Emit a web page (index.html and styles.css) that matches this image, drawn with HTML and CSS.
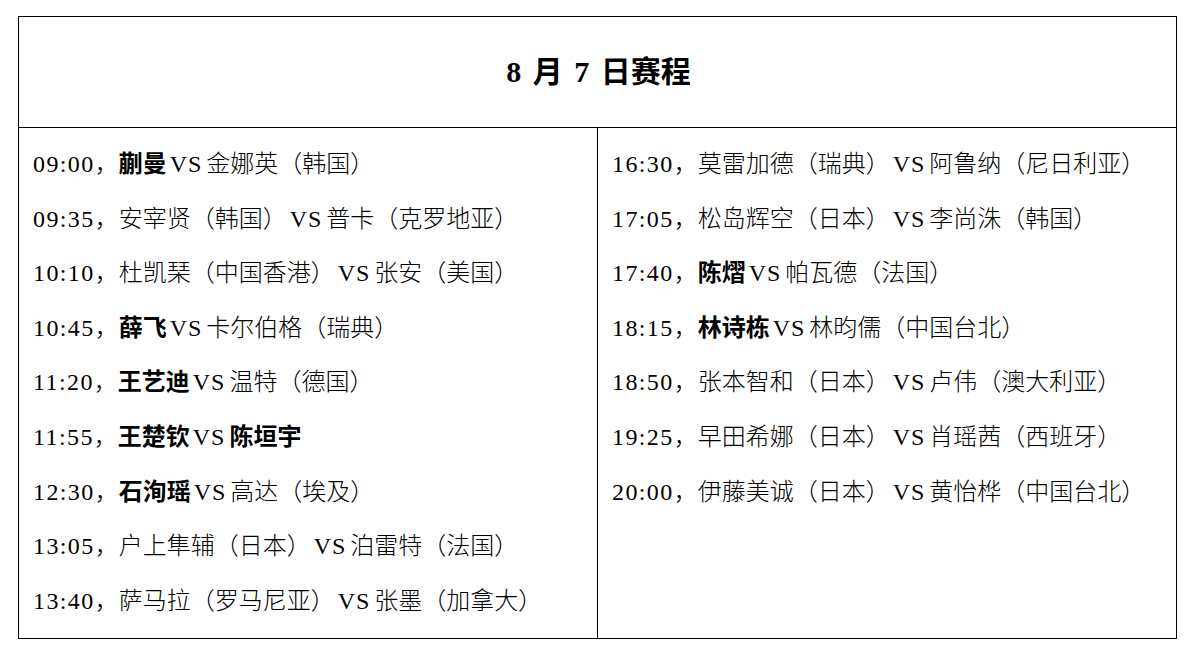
FILE: index.html
```html
<!DOCTYPE html>
<html lang="zh-CN">
<head>
<meta charset="utf-8">
<title>8月7日赛程</title>
<link rel="stylesheet" href="styles.css">
</head>
<body>
<div class="sheet">
  <div class="head"><h1 class="title">8 月 7 日赛程</h1></div>
  <div class="body">
    <div class="col">
      <div class="row"><span class="t">09:00</span>，<b>蒯曼</b><span class="vs">VS</span>金娜英（韩国）</div>
      <div class="row"><span class="t">09:35</span>，安宰贤（韩国）<span class="vs">VS</span>普卡（克罗地亚）</div>
      <div class="row"><span class="t">10:10</span>，杜凯琹（中国香港）<span class="vs">VS</span>张安（美国）</div>
      <div class="row"><span class="t">10:45</span>，<b>薛飞</b><span class="vs">VS</span>卡尔伯格（瑞典）</div>
      <div class="row"><span class="t">11:20</span>，<b>王艺迪</b><span class="vs">VS</span>温特（德国）</div>
      <div class="row"><span class="t">11:55</span>，<b>王楚钦</b><span class="vs">VS</span><b>陈垣宇</b></div>
      <div class="row"><span class="t">12:30</span>，<b>石洵瑶</b><span class="vs">VS</span>高达（埃及）</div>
      <div class="row"><span class="t">13:05</span>，户上隼辅（日本）<span class="vs">VS</span>泊雷特（法国）</div>
      <div class="row"><span class="t">13:40</span>，萨马拉（罗马尼亚）<span class="vs">VS</span>张墨（加拿大）</div>
    </div>
    <div class="col">
      <div class="row"><span class="t">16:30</span>，莫雷加德（瑞典）<span class="vs">VS</span>阿鲁纳（尼日利亚）</div>
      <div class="row"><span class="t">17:05</span>，松岛辉空（日本）<span class="vs">VS</span>李尚洙（韩国）</div>
      <div class="row"><span class="t">17:40</span>，<b>陈熠</b><span class="vs">VS</span>帕瓦德（法国）</div>
      <div class="row"><span class="t">18:15</span>，<b>林诗栋</b><span class="vs">VS</span>林昀儒（中国台北）</div>
      <div class="row"><span class="t">18:50</span>，张本智和（日本）<span class="vs">VS</span>卢伟（澳大利亚）</div>
      <div class="row"><span class="t">19:25</span>，早田希娜（日本）<span class="vs">VS</span>肖瑶茜（西班牙）</div>
      <div class="row"><span class="t">20:00</span>，伊藤美诚（日本）<span class="vs">VS</span>黄怡桦（中国台北）</div>
    </div>
  </div>
</div>
</body>
</html>
```
FILE: styles.css
```css
html, body {
  margin: 0;
  padding: 0;
  background: #fff;
}
body {
  padding: 16px 0 0 18px;
  font-family: "Liberation Serif", "Noto Sans CJK SC", serif;
  color: #000;
}
.sheet {
  width: 1157px;
  border: 1px solid #000;
}
.head {
  height: 110px;
  border-bottom: 1px solid #000;
  display: flex;
  align-items: center;
  justify-content: center;
}
.title {
  margin: 0;
  font-size: 30px;
  font-weight: 700;
  word-spacing: 4px;
  line-height: 1;
  padding-left: 2px;
}
.body {
  display: grid;
  grid-template-columns: 578px 1fr;
}
.col {
  padding: 9px 0 10px 14px;
  font-size: 24px;
  line-height: 54.6px;
  font-weight: 300;
  white-space: nowrap;
}
.col + .col {
  border-left: 1px solid #000;
}
.row {
  height: 54.6px;
}
.t {
  letter-spacing: 1.4px;
}
.vs {
  margin: 0 4px 0 3px;
  letter-spacing: 1px;
}
b {
  font-weight: 700;
}
```
